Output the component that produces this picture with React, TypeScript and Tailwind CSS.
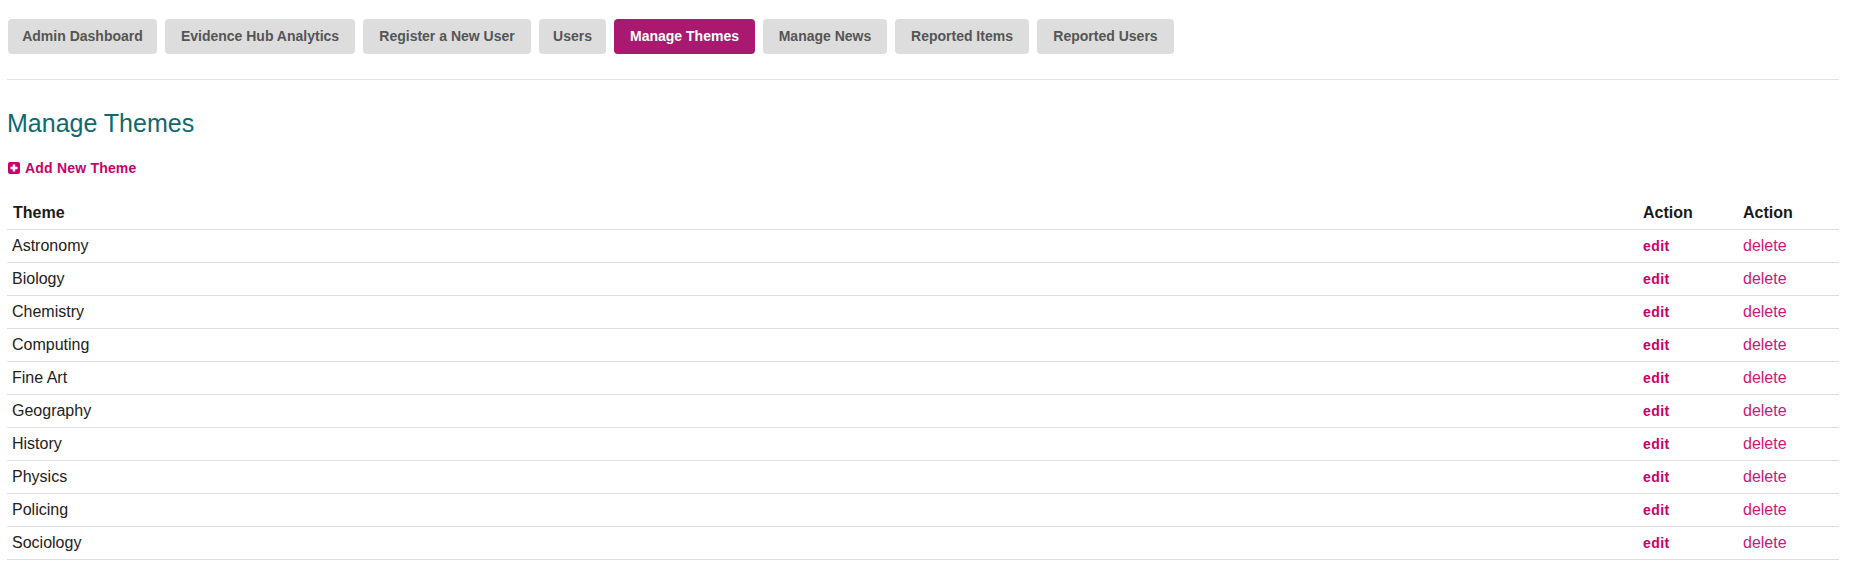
import { useState } from 'react'

const NAV = [
  { label: 'Admin Dashboard', w: 'w-[149px]' },
  { label: 'Evidence Hub Analytics', w: 'w-[190px]' },
  { label: 'Register a New User', w: 'w-[168px]' },
  { label: 'Users', w: 'w-[67px]' },
  { label: 'Manage Themes', w: 'w-[141px]' },
  { label: 'Manage News', w: 'w-[124px]' },
  { label: 'Reported Items', w: 'w-[134px]' },
  { label: 'Reported Users', w: 'w-[137px]' },
]

const THEMES = [
  'Astronomy',
  'Biology',
  'Chemistry',
  'Computing',
  'Fine Art',
  'Geography',
  'History',
  'Physics',
  'Policing',
  'Sociology',
]

function PlusSquare() {
  return (
    <svg width="12" height="12" viewBox="0 0 12 12" className="shrink-0">
      <rect x="0" y="0" width="12" height="12" rx="2" fill="#c9006b" />
      <path d="M6 2.5v7M2.5 6h7" stroke="#fff" strokeWidth="2.4" />
    </svg>
  )
}

export default function App() {
  const [active, setActive] = useState('Manage Themes')

  return (
    <div className="min-h-screen bg-white pl-[7px] pr-[14px] pt-[19px] font-['Liberation_Sans',Arial,sans-serif] text-[#222]">
      {/* Admin nav */}
      <nav className="flex gap-2 pl-px">
        {NAV.map((n) => (
          <button
            key={n.label}
            onClick={() => setActive(n.label)}
            className={`h-[35px] ${n.w} rounded-[4px] text-[14px] font-bold flex items-center justify-center whitespace-nowrap ${
              active === n.label
                ? 'bg-[#a8196f] text-white'
                : 'bg-[#dddddd] text-[#555555]'
            }`}
          >
            {n.label}
          </button>
        ))}
      </nav>

      <div className="mt-[25px] h-px bg-[#e3e3e3]" />

      <h3 className="mt-[29px] text-[25px] leading-[28px] text-[#0e6a70]">
        Manage Themes
      </h3>

      <a
        href="#"
        className="mt-[21px] flex items-center gap-[5px] pl-px text-[14px] leading-[20px] font-bold tracking-[0.2px] text-[#c9006b]"
      >
        <PlusSquare />
        Add New Theme
      </a>

      {/* Themes table */}
      <div className="mt-[18px] text-[16px]">
        <div className="grid h-[34px] grid-cols-[1fr_100px_102px] items-center border-b border-[#dddddd] font-bold text-[#1a1a1a]">
          <div className="pl-[6px]">Theme</div>
          <div className="pl-[6px]">Action</div>
          <div className="pl-[6px]">Action</div>
        </div>
        {THEMES.map((t) => (
          <div
            key={t}
            className="grid h-[33px] grid-cols-[1fr_100px_102px] items-center border-b border-[#dddddd]"
          >
            <div className="pl-[5px] pb-px">{t}</div>
            <div className="pl-[6px]">
              <a href="#" className="text-[14px] font-bold tracking-[0.4px] text-[#c8006a]">
                edit
              </a>
            </div>
            <div className="pl-[6px] pb-px">
              <a href="#" className="text-[#d0157a]">
                delete
              </a>
            </div>
          </div>
        ))}
      </div>
    </div>
  )
}
